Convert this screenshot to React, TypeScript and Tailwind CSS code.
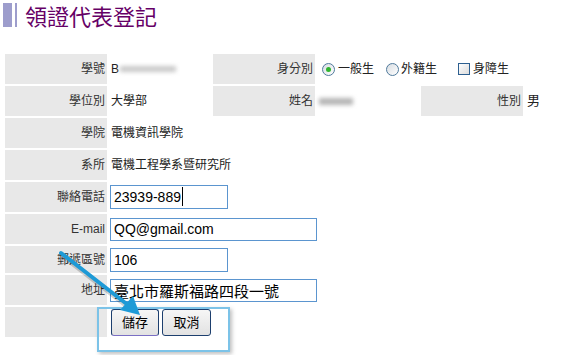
import React from "react";

const font = "font-['Liberation_Sans','Noto_Sans_CJK_TC',sans-serif]";

function Label({ children }: { children?: React.ReactNode }) {
  return (
    <div className="bg-[#e8e8e8] flex items-center justify-end pr-[2px] text-[12px] text-[#333]">
      {children}
    </div>
  );
}

function Radio({ checked }: { checked?: boolean }) {
  return (
    <span className="w-[13px] h-[13px] rounded-full border border-[#4f7a9c] bg-gradient-to-br from-[#d8dde2] to-white flex items-center justify-center">
      {checked && <span className="w-[5px] h-[5px] rounded-full bg-[#2fb52f]" />}
    </span>
  );
}

export default function App() {
  return (
    <div className={`relative w-[572px] h-[355px] bg-white overflow-hidden ${font}`}>
      {/* Title */}
      <div className="flex items-center pl-[3px] pt-[3px] h-[27px]">
        <span className="w-[9px] h-[24px] bg-[#9d9dcc]" />
        <span className="w-[2px] h-[24px] bg-[#9d9dcc] ml-[3px]" />
        <h1 className="ml-[8px] text-[22px] leading-none text-[#660066] font-['Noto_Sans_CJK_TC',sans-serif]">
          領證代表登記
        </h1>
      </div>

      <div className="mt-[27px] ml-[5px] grid grid-cols-[102px_102px_102px_102px_102px_1fr] gap-[2px] text-[12px] text-[#222]">
        {/* row 1 */}
        <Label>學號</Label>
        <div className="h-[30px] flex items-center pl-[2px]">
          B<span className="ml-[1px] w-[56px] h-[6px] bg-[#c9c9c9] blur-[2px]" />
        </div>
        <Label>身分別</Label>
        <div className="col-span-3 flex items-center pl-[5px] text-[12px]">
          <Radio checked />
          <span className="ml-[3px]">一般生</span>
          <span className="ml-[12px]"><Radio /></span>
          <span className="ml-[2px]">外籍生</span>
          <span className="ml-[21px] w-[12px] h-[12px] border border-[#2d5f90] bg-gradient-to-br from-white to-[#dcdcdc]" />
          <span className="ml-[3px]">身障生</span>
        </div>

        {/* row 2 */}
        <Label>學位別</Label>
        <div className="h-[30px] flex items-center pl-[2px]">大學部</div>
        <Label>姓名</Label>
        <div className="flex items-center pl-[2px]">
          <span className="w-[34px] h-[7px] bg-[#b5b5b5] blur-[2px]" />
        </div>
        <Label>性別</Label>
        <div className="flex items-center pl-[2px] text-[13px]">男</div>

        {/* row 3 */}
        <Label>學院</Label>
        <div className="col-span-5 h-[30px] flex items-center pl-[2px]">電機資訊學院</div>

        {/* row 4 */}
        <Label>系所</Label>
        <div className="col-span-5 h-[30px] flex items-center pl-[2px]">電機工程學系暨研究所</div>

        {/* row 5 */}
        <Label>聯絡電話</Label>
        <div className="col-span-5 h-[30px] flex items-center pl-[1px]">
          <div className="relative">
            <input
              readOnly
              defaultValue="23939-889"
              className="w-[118px] h-[24px] border border-[#5b95cf] px-[3px] text-[14px] text-black outline-none"
            />
            <span className="absolute left-[72px] top-[2px] w-[1px] h-[19px] bg-black" />
          </div>
        </div>

        {/* row 6 */}
        <Label>E-mail</Label>
        <div className="col-span-5 h-[30px] flex items-center pl-[1px]">
          <input
            readOnly
            defaultValue="QQ@gmail.com"
            className="w-[207px] h-[23px] border border-[#5b95cf] px-[3px] text-[14px] text-black outline-none"
          />
        </div>

        {/* row 7 */}
        <Label>郵遞區號</Label>
        <div className="col-span-5 h-[27px] flex items-center pl-[1px]">
          <input
            readOnly
            defaultValue="106"
            className="w-[118px] h-[24px] border border-[#5b95cf] px-[3px] text-[14px] text-black outline-none"
          />
        </div>

        {/* row 8 */}
        <Label>地址</Label>
        <div className="col-span-5 h-[30px] flex items-center pl-[1px]">
          <input
            readOnly
            defaultValue="臺北市羅斯福路四段一號"
            className="w-[207px] h-[23px] border border-[#5b95cf] px-[3px] text-[15px] text-black outline-none"
          />
        </div>

        {/* row 9 */}
        <Label />
        <div className="col-span-5 h-[30px] flex items-start pt-[2px] pl-[2px] gap-[3px]">
          <button className="w-[48px] h-[27px] rounded-[3px] border border-[#1d3f6e] border-b-[#7a6fc4] bg-gradient-to-b from-[#f6f6f6] to-[#e2e2e2] text-[13px] text-black">
            儲存
          </button>
          <button className="w-[49px] h-[27px] rounded-[3px] border border-[#1d3f6e] bg-gradient-to-b from-[#f6f6f6] to-[#e2e2e2] text-[13px] text-black">
            取消
          </button>
        </div>
      </div>

      {/* annotation: highlight box */}
      <div className="absolute left-[97px] top-[307px] w-[133px] h-[45px] border-2 border-[#7cc3e8] shadow-[2px_2px_4px_rgba(0,0,0,0.25)] pointer-events-none" />

      {/* annotation: arrow */}
      <svg className="absolute inset-0 pointer-events-none" width="572" height="355" viewBox="0 0 572 355">
        <line x1="62" y1="256" x2="130" y2="309" stroke="rgba(0,0,0,0.18)" strokeWidth="4" />
        <line x1="61" y1="253" x2="128" y2="305" stroke="#1e9ad6" strokeWidth="4" strokeLinecap="round" />
        <polygon points="140,315 120,310 133,296" fill="#1e9ad6" />
      </svg>
    </div>
  );
}
